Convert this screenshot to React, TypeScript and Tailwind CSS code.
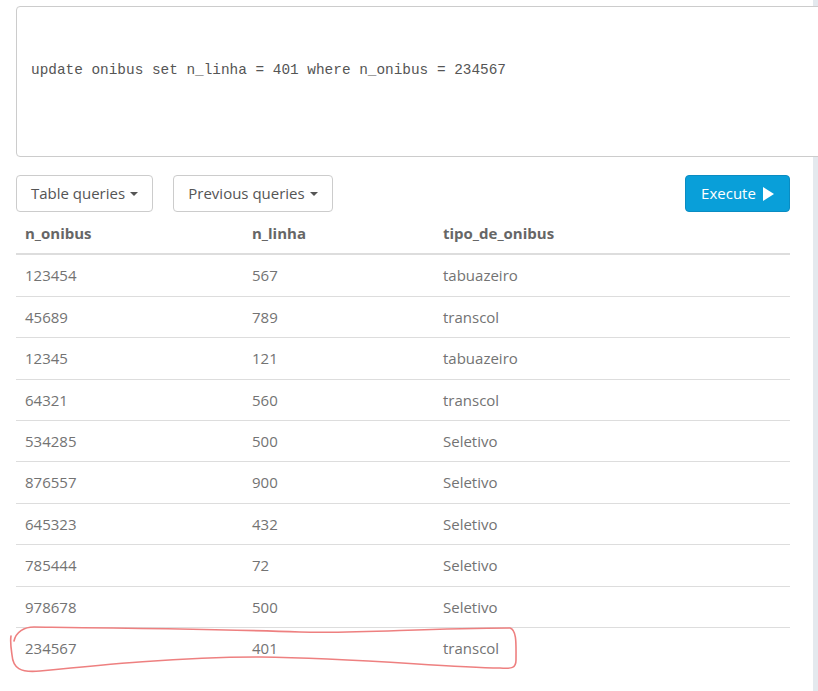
import { ReactNode } from 'react';

const rows = [
  ['123454', '567', 'tabuazeiro'],
  ['45689', '789', 'transcol'],
  ['12345', '121', 'tabuazeiro'],
  ['64321', '560', 'transcol'],
  ['534285', '500', 'Seletivo'],
  ['876557', '900', 'Seletivo'],
  ['645323', '432', 'Seletivo'],
  ['785444', '72', 'Seletivo'],
  ['978678', '500', 'Seletivo'],
  ['234567', '401', 'transcol'],
];

const Caret = () => (
  <span className="ml-[5px] inline-block h-0 w-0 border-x-[4px] border-t-[4px] border-x-transparent border-t-[#555] align-middle" />
);

const DropButton = ({ children, width }: { children: ReactNode; width: string }) => (
  <button
    className={`flex h-[37px] ${width} items-center justify-center rounded-[4px] border border-[#cccccc] bg-white text-[15px] text-[#555555]`}
  >
    {children}
    <Caret />
  </button>
);

// marca vermelha feita à mão em volta da última linha
const Scribble = () => (
  <svg className="pointer-events-none absolute left-0 top-0" width="818" height="691" viewBox="0 0 818 691">
    <path
      d="M14 641 C16 632 24 627 34 627 C120 628 220 629 300 632 C360 634 420 628 510 628 C517 630 516 645 516 660 C516 668 512 669 500 668 C440 667 360 658 260 657 C180 657 100 665 40 671 C20 673 13 668 12 655 C11 648 10 642 11 636"
      fill="none"
      stroke="#ee8080"
      strokeWidth="1.6"
      strokeLinecap="round"
    />
  </svg>
);

export default function App() {
  return (
    <div
      className="relative flex h-[691px] w-[818px] overflow-hidden bg-white"
      style={{ fontFamily: '"Open Sans", "Noto Sans", sans-serif' }}
    >
      <div className="w-[813px] shrink-0 pl-[16px]">
        <div className="relative z-10 mt-[6px] h-[151px] w-[830px] rounded-[4px] border border-[#cccccc] bg-white pl-[14px] pt-[53px]">
          <p className="font-['Liberation_Mono',monospace] text-[14.4px] leading-[20px] text-[#555555]">
            update onibus set n_linha = 401 where n_onibus = 234567
          </p>
        </div>

        <div className="mt-[18px] flex w-[774px] items-center">
          <DropButton width="w-[137px]">Table queries</DropButton>
          <div className="ml-[20px]">
            <DropButton width="w-[160px]">Previous queries</DropButton>
          </div>
          <button className="ml-auto flex h-[37px] w-[105px] items-center justify-center gap-[6px] rounded-[4px] border border-[#0a8cc2] bg-[#099fd9] text-[15px] text-white">
            Execute
            <svg width="12" height="14" viewBox="0 0 12 14">
              <path d="M1 0 L12 7 L1 14 Z" fill="white" />
            </svg>
          </button>
        </div>

        <table className="w-[774px] table-fixed border-collapse text-[15px] leading-[24.4px]">
          <colgroup>
            <col className="w-[227px]" />
            <col className="w-[191px]" />
            <col className="w-[356px]" />
          </colgroup>
          <thead>
            <tr className="border-b-2 border-[#dddddd]">
              <th className="px-[9px] pb-2 pt-[9px] text-left font-bold text-[#666666]">n_onibus</th>
              <th className="px-[9px] pb-2 pt-[9px] text-left font-bold text-[#666666]">n_linha</th>
              <th className="px-[9px] pb-2 pt-[9px] text-left font-bold text-[#666666]">tipo_de_onibus</th>
            </tr>
          </thead>
          <tbody>
            {rows.map((r) => (
              <tr key={r[0]} className="border-t border-[#dddddd] text-[#737373]">
                <td className="px-[9px] py-2">{r[0]}</td>
                <td className="px-[9px] py-2">{r[1]}</td>
                <td className="px-[9px] py-2">{r[2]}</td>
              </tr>
            ))}
          </tbody>
        </table>
      </div>
      <div className="h-full w-[5px] shrink-0 bg-[#e4e9ee]" />
      <Scribble />
    </div>
  );
}
